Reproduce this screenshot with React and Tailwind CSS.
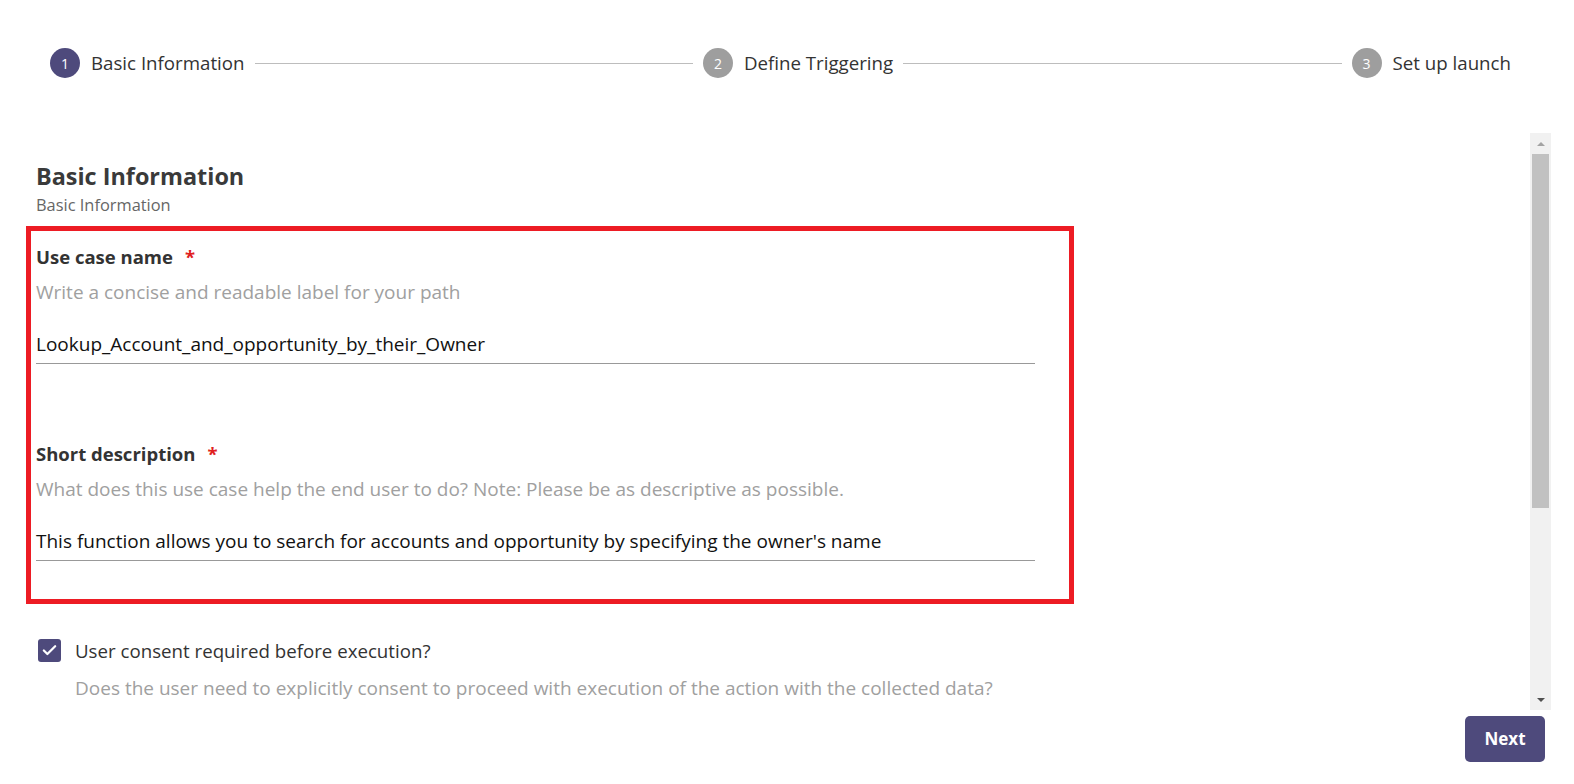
import React from "react";
import { Check } from "lucide-react";

const steps = [
  { n: 1, label: "Basic Information", active: true },
  { n: 2, label: "Define Triggering" },
  { n: 3, label: "Set up launch" },
];

const Stepper = () => (
  <div className="flex items-start pl-[50px] pr-[63px] pt-[48px] h-[133px]">
    {steps.map((s, i) => (
      <React.Fragment key={s.n}>
        <div className="flex items-center h-[30px]">
          <div
            className={`w-[30px] h-[30px] rounded-full flex items-center justify-center text-white text-[14px] ${
              s.active ? "bg-[#4e4a7c]" : "bg-[#9e9e9e]"
            }`}
          >
            {s.n}
          </div>
          <span className="ml-[11px] text-[18.7px] text-[#333]">{s.label}</span>
        </div>
        {i < steps.length - 1 && <div className="flex-1 h-px bg-[#bdbdbd] mx-[10px] mt-[15px]" />}
      </React.Fragment>
    ))}
  </div>
);

const Field = ({ label, hint, value }) => (
  <div>
    <div className="flex items-center text-[18.5px] font-bold text-[#333] leading-[24px]">
      {label}
      <span className="ml-[12px] text-[#e02020] font-bold">*</span>
    </div>
    <div className="mt-[10px] text-[19px] text-[#a0a0a0] leading-[26px]">{hint}</div>
    <div className="mt-[26px] w-[999px] border-b border-[#999] pb-[6px] text-[19px] text-[#111] leading-[26px]">
      {value}
    </div>
  </div>
);

const Scrollbar = () => (
  <div className="w-[21px] bg-[#f1f1f1] flex flex-col items-center">
    <div className="h-[21px] flex items-center justify-center">
      <div className="w-0 h-0 border-l-[4px] border-r-[4px] border-b-[4px] border-l-transparent border-r-transparent border-b-[#a3a3a3]" />
    </div>
    <div className="w-[17px] h-[354px] bg-[#c1c1c1]" />
    <div className="flex-1" />
    <div className="h-[21px] flex items-center justify-center">
      <div className="w-0 h-0 border-l-[4px] border-r-[4px] border-t-[4px] border-l-transparent border-r-transparent border-t-[#505050]" />
    </div>
  </div>
);

export default function App() {
  return (
    <div className="w-full h-[784px] bg-white overflow-hidden" style={{ fontFamily: '"Open Sans", "Noto Sans", sans-serif' }}>
      <Stepper />
      <div className="flex h-[577px] pr-[23px]">
        <div className="flex-1 pl-[36px] pt-[28px]">
          <h2 className="text-[23.4px] font-bold text-[#3a3a3a] leading-[30px]">Basic Information</h2>
          <p className="text-[16.4px] text-[#666] leading-[22px] mt-[3px]">Basic Information</p>
          <div className="ml-[-10px] mt-[10px] w-[1048px] h-[378px] border-[5px] border-[#ed1c24] pl-[5px] pt-[14px]">
            <Field
              label="Use case name"
              hint="Write a concise and readable label for your path"
              value="Lookup_Account_and_opportunity_by_their_Owner"
            />
            <div className="h-[78px]" />
            <Field
              label="Short description"
              hint="What does this use case help the end user to do? Note: Please be as descriptive as possible."
              value="This function allows you to search for accounts and opportunity by specifying the owner's name"
            />
          </div>
          <div className="flex mt-[35px]">
            <div className="w-[23px] h-[23px] ml-[2px] rounded-[3px] bg-[#4e4a7c] flex items-center justify-center">
              <Check className="w-[17px] h-[17px] text-white" strokeWidth={3.2} />
            </div>
            <div className="ml-[14px]">
              <div className="text-[18.7px] text-[#333] leading-[24px]">User consent required before execution?</div>
              <div className="mt-[12px] text-[19px] text-[#a0a0a0] leading-[26px]">
                Does the user need to explicitly consent to proceed with execution of the action with the collected data?
              </div>
            </div>
          </div>
        </div>
        <Scrollbar />
      </div>
      <div className="flex justify-end pr-[29px] pt-[6px]">
        <button className="w-[80px] h-[46px] rounded-[5px] bg-[#4e4a7c] text-white font-bold text-[17px]">Next</button>
      </div>
    </div>
  );
}
